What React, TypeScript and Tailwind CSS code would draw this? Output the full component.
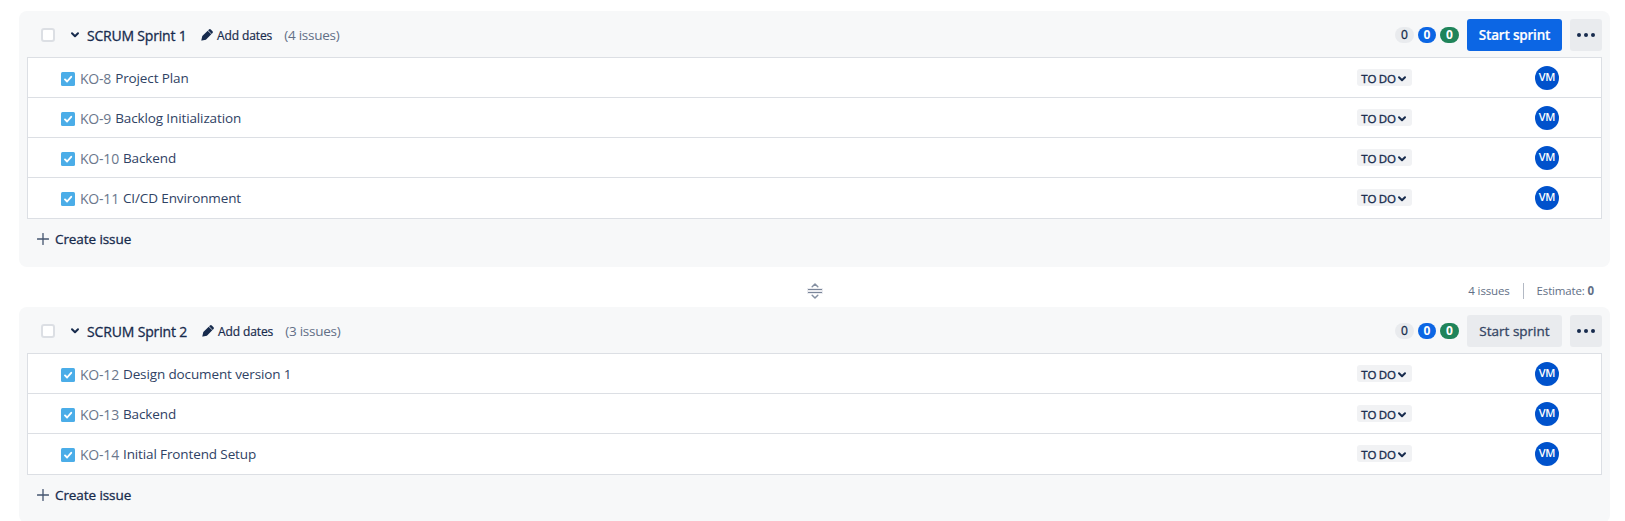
import React from "react";

type Issue = { id: string; title: string };

const sprintOne: Issue[] = [
  { id: "KO-8", title: "Project Plan" },
  { id: "KO-9", title: "Backlog Initialization" },
  { id: "KO-10", title: "Backend" },
  { id: "KO-11", title: "CI/CD Environment" },
];

const sprintTwo: Issue[] = [
  { id: "KO-12", title: "Design document version 1" },
  { id: "KO-13", title: "Backend" },
  { id: "KO-14", title: "Initial Frontend Setup" },
];

function Chevron({ className }: { className: string }) {
  return (
    <svg viewBox="0 0 10 8" className={className} fill="none" stroke="currentColor" strokeWidth="2" strokeLinecap="round" strokeLinejoin="round">
      <path d="M2 2.3 5 5.3 8 2.3" />
    </svg>
  );
}

function Pencil() {
  return (
    <svg viewBox="0 0 12 12" className="h-3 w-3 shrink-0" fill="currentColor">
      <path d="M1.3 7.1 6.7 1.7 10.3 5.3 4.9 10.7 1 11.6a.5.5 0 0 1-.6-.6Z" />
      <path d="M7.1 1.3 8 .5a1.3 1.3 0 0 1 1.8 0l1.7 1.7a1.3 1.3 0 0 1 0 1.8l-.8.9Z" />
    </svg>
  );
}

function IssueRow({ issue }: { issue: Issue }) {
  return (
    <div className="flex h-10 items-center border-b border-[#dcdfe4] pl-[33px] pr-[42px] last:border-transparent">
      <svg viewBox="0 0 14 14" className="mt-[3px] h-[14px] w-[14px] shrink-0">
        <rect width="14" height="14" rx="1.5" fill="#4bade8" />
        <path d="M4 7.4 6.1 9.5 10.2 4.8" fill="none" stroke="#fff" strokeWidth="1.9" strokeLinecap="round" strokeLinejoin="round" />
      </svg>
      <span className="ml-[5px] pt-px text-[14px] tracking-[-0.2px] text-[#6b778c]">{issue.id}</span>
      <span className="ml-1 pt-px text-[13.5px] tracking-[-0.12px] text-[#2f4264]">{issue.title}</span>
      <button className="ml-auto flex h-[17px] w-[55px] items-center rounded-[3px] bg-[#f1f2f4] pl-1 text-[11.5px] leading-[17px] text-[#172b4d]">
        <span className="w-[35px] whitespace-nowrap pt-px tracking-[-0.25px] [-webkit-text-stroke:0.35px]">TO DO</span>
        <Chevron className="ml-px mt-[2px] h-2 w-[10px]" />
      </button>
      <span className="ml-[123px] flex h-6 w-6 items-center justify-center rounded-full bg-[#0052cc] text-[11px] font-semibold tracking-[-0.3px] text-white">
        VM
      </span>
    </div>
  );
}

type SprintProps = { name: string; nameClass: string; issues: Issue[]; primary?: boolean };

function Sprint({ name, nameClass, issues, primary }: SprintProps) {
  return (
    <section className="rounded-lg bg-[#f7f8f9] px-2">
      <header className="flex h-[46px] items-center pl-[14px] pt-[2px] text-[#172b4d]">
        <span className="h-[14px] w-[14px] rounded-[3px] border-2 border-[#dcdfe4] bg-white" />
        <Chevron className="ml-[15px] h-2 w-[10px]" />
        <h2 className={nameClass}>{name}</h2>
        <button className="flex items-center gap-1 whitespace-nowrap text-[12px] tracking-[-0.1px] [-webkit-text-stroke:0.2px]">
          <Pencil />
          <span className="pt-px">Add dates</span>
        </button>
        <span className="ml-3 whitespace-nowrap text-[13.5px] tracking-[-0.25px] text-[#626f86]">({issues.length} issues)</span>
        <div className="ml-auto flex items-center gap-1 text-[12px] leading-4">
          <span className="flex h-4 w-[19px] justify-center rounded-full bg-[#e9ebee] [-webkit-text-stroke:0.3px]">0</span>
          <span className="flex h-4 w-[18px] justify-center rounded-full bg-[#0c66e4] font-bold text-white">0</span>
          <span className="flex h-4 w-[19px] justify-center rounded-full bg-[#1f845a] font-bold text-white">0</span>
        </div>
        <button
          className={
            primary
              ? "ml-2 h-8 w-[95px] whitespace-nowrap rounded-[3px] bg-[#0c66e4] text-[13.5px] font-semibold tracking-[-0.2px] text-white [-webkit-text-stroke:0.2px]"
              : "ml-2 h-8 w-[95px] whitespace-nowrap rounded-[3px] bg-[#e9ebee] text-[13.5px] text-[#344563] [-webkit-text-stroke:0.3px]"
          }
        >
          Start sprint
        </button>
        <button className="ml-2 flex h-8 w-8 items-center justify-center rounded-[3px] bg-[#e9ebee]">
          <svg viewBox="0 0 18 4" className="h-1 w-[18px]" fill="currentColor">
            <circle cx="2" cy="2" r="2" />
            <circle cx="9" cy="2" r="2" />
            <circle cx="16" cy="2" r="2" />
          </svg>
        </button>
      </header>
      <div className="border border-[#dcdfe4] bg-white">
        {issues.map((issue) => (
          <IssueRow key={issue.id} issue={issue} />
        ))}
      </div>
      <div className="flex h-12 items-start pl-[10px] pt-[10px]">
        <button className="flex h-5 items-center gap-[6px] whitespace-nowrap text-[13.5px] text-[#172b4d]">
          <svg viewBox="0 0 12 12" className="h-3 w-3 text-[#44546f]" stroke="currentColor" strokeWidth="1.3" strokeLinecap="round">
            <path d="M6 .5v11M.5 6h11" />
          </svg>
          <span className="tracking-[-0.08px] [-webkit-text-stroke:0.3px]">Create issue</span>
        </button>
      </div>
    </section>
  );
}

export default function App() {
  return (
    <main className="h-[521px] overflow-hidden bg-white pl-[19px] pr-[15px] pt-[11px] font-['Open_Sans','Noto_Sans',sans-serif]">
      <Sprint
        name="SCRUM Sprint 1"
        nameClass="ml-[7px] w-[114px] whitespace-nowrap text-[14px] tracking-[-0.2px] [-webkit-text-stroke:0.3px]"
        issues={sprintOne}
        primary
      />
      <div className="grid h-10 grid-cols-[1fr_16px_1fr] items-center pt-2 text-[#626f86]">
        <span />
        <svg viewBox="0 0 16 16" className="h-4 w-4" fill="none" stroke="#8590a2" strokeWidth="1.5">
          <path d="M0 5h16v6H0z" fill="#ebecf0" stroke="none" />
          <path d="M1 6.5h14M1 9.5h14" strokeWidth="1" stroke="#7a869a" />
          <path d="M5.2 3.7 8 1l2.8 2.7M5.2 12.3 8 15l2.8-2.7" strokeLinecap="round" strokeLinejoin="round" />
        </svg>
        <div className="flex items-center justify-end pr-4 text-[11.5px] tracking-[-0.15px]">
          <span className="pb-px">4 issues</span>
          <span className="mx-[13px] h-4 w-px bg-[#b3b9c4]" />
          <span className="pb-px">
            Estimate: <b className="font-bold">0</b>
          </span>
        </div>
      </div>
      <Sprint
        name="SCRUM Sprint 2"
        nameClass="ml-[7px] w-[115px] whitespace-nowrap text-[14px] tracking-[-0.15px] [-webkit-text-stroke:0.3px]"
        issues={sprintTwo}
      />
    </main>
  );
}
